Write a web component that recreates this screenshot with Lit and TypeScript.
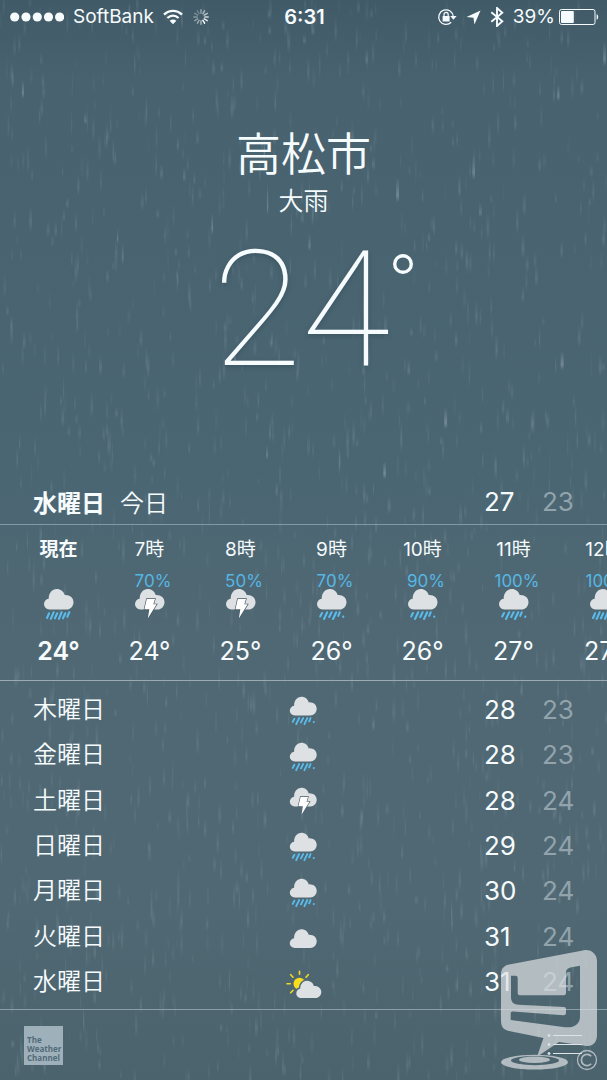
import { LitElement, html, svg, css, nothing } from "lit";
import { customElement, property } from "lit/decorators.js";

type Sky = "heavy" | "rain" | "thunder" | "cloud" | "sun";

interface Hour {
  label: string;
  chance?: string;
  sky: Sky;
  temp: string;
}

interface Day {
  name: string;
  sky: Sky;
  high: number;
  low: number;
}

const HOURS: Hour[] = [
  { label: "現在", sky: "heavy", temp: "24°" },
  { label: "7時", chance: "70%", sky: "thunder", temp: "24°" },
  { label: "8時", chance: "50%", sky: "thunder", temp: "25°" },
  { label: "9時", chance: "70%", sky: "rain", temp: "26°" },
  { label: "10時", chance: "90%", sky: "rain", temp: "26°" },
  { label: "11時", chance: "100%", sky: "rain", temp: "27°" },
  { label: "12時", chance: "100%", sky: "heavy", temp: "27°" },
];

const DAYS: Day[] = [
  { name: "木曜日", sky: "rain", high: 28, low: 23 },
  { name: "金曜日", sky: "rain", high: 28, low: 23 },
  { name: "土曜日", sky: "thunder", high: 28, low: 24 },
  { name: "日曜日", sky: "rain", high: 29, low: 24 },
  { name: "月曜日", sky: "rain", high: 30, low: 24 },
  { name: "火曜日", sky: "cloud", high: 31, low: 24 },
  { name: "水曜日", sky: "sun", high: 31, low: 24 },
];

/* Falling rain behind the forecast */
@customElement("rain-backdrop")
export class RainBackdrop extends LitElement {
  static styles = css`
    :host {
      display: block;
    }
    .rain {
      display: block;
      width: 100%;
      height: 100%;
    }
  `;

  render() {
    let seed = 20160629;
    const next = () => {
      seed = (seed * 1664525 + 1013904223) % 4294967296;
      return seed / 4294967296;
    };
    const drops = Array.from({ length: 1500 }, () => {
      const length = 10 + next() * 20;
      const width = 1 + next() * 2;
      return {
        x: next() * 607,
        y: next() * 1080 - 10,
        length,
        width,
        alpha: 0.2 + next() * 0.5,
      };
    });
    const bright = Array.from({ length: 30 }, () => ({
      x: next() * 607,
      y: next() * 480,
      length: 10 + next() * 18,
      width: 1 + next() * 2,
      alpha: 0.4 + next() * 0.5,
    }));
    const draw = (
      d: { x: number; y: number; length: number; width: number; alpha: number },
      fill: string
    ) => svg`<rect x=${d.x.toFixed(1)} y=${d.y.toFixed(1)}
      width=${d.width.toFixed(1)} height=${d.length.toFixed(1)}
      opacity=${Math.min(1, d.alpha).toFixed(2)} fill=${fill}></rect>`;
    return html`<svg class="rain" viewBox="0 0 607 1080" preserveAspectRatio="xMidYMid slice" aria-hidden="true">
      <defs>
        <linearGradient id="soft" x1="0" y1="0" x2="0" y2="1">
          <stop offset="0" stop-color="#b4cad4" stop-opacity="0"></stop>
          <stop offset="0.6" stop-color="#b4cad4" stop-opacity="0.22"></stop>
          <stop offset="1" stop-color="#b4cad4" stop-opacity="0"></stop>
        </linearGradient>
        <linearGradient id="streak" x1="0" y1="0" x2="0" y2="1">
          <stop offset="0" stop-color="#cfe0e6" stop-opacity="0"></stop>
          <stop offset="0.7" stop-color="#cfe0e6" stop-opacity="0.35"></stop>
          <stop offset="1" stop-color="#cfe0e6" stop-opacity="0"></stop>
        </linearGradient>
      </defs>
      ${drops.map((d) => draw(d, "url(#soft)"))}
      ${bright.map((d) => draw(d, "url(#streak)"))}
    </svg>`;
  }
}

/* One weather glyph: cloud with rain, lightning or sun */
@customElement("sky-icon")
export class SkyIcon extends LitElement {
  static properties = { sky: { type: String } };
  declare sky: Sky;

  static styles = css`
    :host {
      display: block;
      width: 36px;
      height: 34px;
    }
    .glyph {
      display: block;
      width: 100%;
      height: 100%;
      overflow: visible;
    }
    .cloud {
      fill: #dde1e4;
    }
    .drop {
      fill: none;
      stroke: #5abcec;
      stroke-width: 2.1;
      stroke-linecap: round;
    }
    .bolt {
      fill: #ffffff;
      stroke: #4b5a64;
      stroke-width: 1.3;
      stroke-linejoin: miter;
      paint-order: stroke;
    }
    .sun {
      fill: #f8dd1c;
    }
    .ray {
      fill: none;
      stroke: #f3dc1e;
      stroke-width: 1.6;
      stroke-linecap: round;
    }
    .gap {
      fill: #516a77;
    }
  `;

  private cloud() {
    return svg`<path class="cloud" d="M8.6 22.5C5.4 22.5 3 20.1 3 17.1C3 14.3 5 12.1 7.7 11.7C7.6 6.2 11.2 2 15.8 2C19.6 2 22.6 4.4 23.7 8.1C28.700 7.700 32.500 10.900 32.500 15.200C32.500 19.300 29.400 22.500 25.500 22.500Z"></path>`;
  }

  render() {
    const heavy = "M8 26.300L6 31M12.600 25.300L9.800 31.800M16.200 26.300L13.900 31.300M20.700 25.300L17.900 31.800M24.300 26.300L22 31.300M28.300 25.300L26.300 29.800";
    const steady = "M8 26L6.200 29.500M13.200 25.300L10 32M17.600 25.300L15.200 30M22.200 25.300L19 32M25.700 25.300L24.200 28.800M29.300 29.500L29.200 29.800";
    return html`<svg class="glyph" viewBox="0 0 36 34" aria-hidden="true">
      ${this.sky === "sun"
        ? svg`<g transform="translate(0 5)">
          <path class="ray" d="M13.500 1.200V4.300M4.700 4.700L7 7.200M22.300 4.700L20 7.200M1 13.800H4.200M4.700 22.700L7 20.300"></path>
          <circle class="sun" cx="13.500" cy="13.800" r="6"></circle>
          <path class="gap" d="M9.200 21C9.800 19.200 11 18 12.900 17.500C13.500 12.500 16.500 9.400 20.900 9.400L24 16L12 25Z"></path>
          <path class="cloud" d="M15.200 28C12.400 28 10.300 26 10.300 23.400C10.300 21 12 19.100 14.200 18.800C14.200 14.100 17.300 10.700 21.200 10.700C24.500 10.700 27 12.800 27.900 15.900C32.200 15.600 35.300 18.300 35.300 22C35.300 25.400 32.700 28 29.400 28Z"></path></g>`
        : this.sky === "cloud"
          ? svg`<g transform="translate(0 6)">${this.cloud()}</g>`
          : this.cloud()}
      ${this.sky === "heavy" ? svg`<path class="drop" d=${heavy}></path>` : nothing}
      ${this.sky === "rain" ? svg`<path class="drop" d=${steady}></path>` : nothing}
      ${this.sky === "thunder"
        ? svg`<path class="bolt" d="M14.800 12H23L21.300 17.300H24.600L15.800 31.500L17.300 22.300H12.400Z"></path>`
        : nothing}
    </svg>`;
  }
}

@customElement("app-root")
export class AppRoot extends LitElement {
  static styles = css`
    :host {
      display: block;
      color: #f6fbfd;
      font-family: Inter, "Noto Sans CJK JP", sans-serif;
    }
    .screen {
      position: relative;
      box-sizing: border-box;
      min-height: 100vh;
      display: flex;
      flex-direction: column;
      overflow: hidden;
      background: linear-gradient(#405a67 0, #48626f 80px, #4b6673 45%, #506873 60%, #506873 84%, #4b636d 100%);
    }
    .rain {
      position: absolute;
      inset: 0;
    }
    .status,
    .now,
    .today,
    .hours,
    .days,
    .foot {
      position: relative;
    }

    .status {
      display: grid;
      grid-template-columns: 1fr auto 1fr;
      align-items: center;
      height: 34px;
      padding: 0 8px 0 10px;
      font-size: 19px;
      line-height: 24px;
    }
    .side {
      display: flex;
      align-items: center;
      gap: 9px;
    }
    .end {
      justify-content: flex-end;
    }
    .clock {
      font-size: 20px;
      font-weight: 600;
    }
    .bars,
    .wifi,
    .spin,
    .lock,
    .arrow,
    .tooth,
    .cell {
      display: block;
      flex: none;
      fill: #f6fbfd;
    }
    .thin {
      fill: none;
      stroke: #f6fbfd;
    }
    .power {
      display: flex;
      align-items: center;
      gap: 4px;
    }

    .now {
      height: 440px;
      padding-top: 93px;
      display: flex;
      flex-direction: column;
      align-items: center;
      box-sizing: border-box;
    }
    .city {
      margin: 0;
      font-size: 45px;
      line-height: 56px;
      font-weight: 350;
    }
    .condition {
      margin: 0;
      font-size: 25px;
      line-height: 36px;
      font-weight: 350;
    }
    .reading {
      display: flex;
      margin: 7px 0 0 20px;
      font-family: Roboto, sans-serif;
      font-size: 162px;
      line-height: 168px;
      font-weight: 100;
      text-shadow: 0 2px 4px #2c465480;
    }
    .degree {
      width: 22px;
      height: 22px;
      margin: 27px 0 0 2px;
    }

    .today {
      display: flex;
      align-items: center;
      gap: 15px;
      height: 46px;
      padding: 4px 33px 0;
      border-bottom: 1px solid #8499a4;
      font-size: 24px;
      font-weight: 350;
    }
    .weekday {
      font-weight: 700;
    }
    .range {
      display: grid;
      grid-template-columns: 32px 32px;
      gap: 26px;
      margin-left: auto;
      font-size: 26px;
      font-weight: 400;
    }
    .low {
      color: #92a3ac;
    }

    .hours {
      display: flex;
      box-sizing: border-box;
      margin: 0;
      padding: 13px 0 14px 13px;
      list-style: none;
      overflow: hidden;
      border-bottom: 1px solid #9aabb4;
    }
    .hour {
      flex: none;
      width: 91px;
      display: grid;
      grid-template-rows: 24px 36px 34px 34px;
      justify-items: center;
    }
    .hour sky-icon {
      margin-top: -11px;
    }
    .label {
      font-size: 19px;
      line-height: 24px;
    }
    .chance {
      padding: 8px 0 0 7px;
      font-size: 17px;
      line-height: 22px;
      color: #56b6e4;
    }
    .temp {
      align-self: end;
      font-size: 25px;
      line-height: 30px;
    }
    .hour:first-child .label {
      font-weight: 700;
    }
    .hour:first-child .temp {
      font-weight: 600;
    }

    .days {
      flex: 1;
      display: flex;
      flex-direction: column;
      margin: 0;
      padding: 6px 33px 4px;
      list-style: none;
      border-bottom: 1px solid #8b9fa9;
    }
    .day {
      flex: 1;
      display: grid;
      grid-template-columns: 1fr auto 1fr;
      align-items: center;
      font-size: 24px;
      line-height: 36px;
      font-weight: 350;
    }
    .small {
      width: 33px;
      height: 31px;
      margin-top: 2px;
    }

    .foot {
      display: flex;
      align-items: center;
      justify-content: space-between;
      height: 70px;
      padding: 0 24px;
    }
    .source {
      box-sizing: border-box;
      width: 39px;
      height: 39px;
      padding: 9px 0 0 3px;
      background: #9eb0ba;
      color: #526b78;
      font-family: "Open Sans", sans-serif;
      font-size: 8px;
      line-height: 9px;
      font-weight: 700;
      text-decoration: none;
    }
    .list {
      border: 0;
      padding: 0;
      background: none;
    }
    .lines {
      display: block;
      fill: #dfe6ea;
      stroke: #dfe6ea;
    }

    .mark {
      position: absolute;
      right: 8px;
      bottom: 4px;
      pointer-events: none;
    }
    .plate {
      fill: #dde1e4;
      fill-rule: evenodd;
    }
    .ring {
      fill: none;
      stroke: #dde1e4;
    }
  `;

  @property() place = "高松市";

  private statusBar() {
    return html`<header class="status">
      <div class="side">
        <svg class="bars" width="54" height="10" viewBox="0 0 54 10" aria-hidden="true">
          ${[4.7, 16, 27.3, 38.5, 49.6].map((x) => svg`<circle cx=${x} cy="5" r="4.6"></circle>`)}
        </svg>
        <span>SoftBank</span>
        <svg class="wifi" width="20" height="16" viewBox="0 0 20 16" aria-hidden="true">
          <path class="thin" stroke-width="2.300" d="M1 5.600C6.200 0.500 13.800 0.500 19 5.600M4.400 9C7.700 6 12.300 6 15.600 9"></path>
          <path d="M10 15.300L6.600 11.700C8.500 10 11.500 10 13.400 11.700Z"></path>
        </svg>
        <svg class="spin" width="18" height="18" viewBox="-9 -9 18 18" aria-hidden="true">
          ${Array.from({ length: 12 }, (_, i) => svg`<line class="thin" stroke-width="1.500" stroke-linecap="round"
            x1="0" y1="-3.800" x2="0" y2="-7.200" transform=${`rotate(${i * 30})`}
            opacity=${(i < 6 ? 0.45 + i * 0.11 : 0.55 - (i - 6) * 0.06).toFixed(2)}></line>`)}
        </svg>
      </div>
      <time class="clock">6:31</time>
      <div class="side end">
        <svg class="lock" width="20" height="18" viewBox="0 0 20 18" aria-hidden="true">
          <path class="thin" stroke-width="1.300" d="M14.200 14.300A7.300 7.300 0 1 1 16.300 8.500"></path>
          <path d="M13.200 8H19.600L16.400 11.800Z"></path>
          <rect x="5.600" y="8" width="7" height="5.500" rx="0.600"></rect>
          <path class="thin" stroke-width="1.200" d="M7 8.300V6.500A2.100 2.100 0 0 1 11.200 6.500V8.300"></path>
        </svg>
        <svg class="arrow" width="15" height="15" viewBox="0 0 16 16" aria-hidden="true">
          <path d="M15.500 0.500L9 15.500L8 8.300L0.500 7.500Z"></path>
        </svg>
        <svg class="tooth" width="14" height="20" viewBox="0 0 14 20" aria-hidden="true">
          <path class="thin" stroke-width="1.900" d="M1.300 5.300L12.300 14.300L7 19V1L12.300 5.700L1.300 14.700"></path>
        </svg>
        <span class="power">
          <span>39%</span>
          <svg class="cell" width="40" height="16" viewBox="0 0 40 16" aria-hidden="true">
            <rect class="thin" stroke-width="1" x="0.500" y="0.500" width="35.500" height="15" rx="2"></rect>
            <rect x="2" y="2" width="12.800" height="12" rx="0.800"></rect>
            <path d="M37.600 5.200C39.700 5.700 39.700 10.300 37.600 10.800Z"></path>
          </svg>
        </span>
      </div>
    </header>`;
  }

  private watermark() {
    return html`<svg class="mark" width="98" height="128" viewBox="0 0 98 128" opacity="0.7" aria-hidden="true">
      <path class="plate" d="M0 27C0 21.500 2 18 7 16.700L83 2.200C90 1 96 6 96 13V87C96 94 92 98.500 85.700 98L58 94L36 108.700L42.500 90L8 83C3 82 0 79 0 73Z
        M10 27.700V49.300C10 54 12.500 56.500 17.300 56.700L63 59Q65 59.200 65 61V65.300Q65 67.400 62.300 67.300L12 63.400Q9.700 63.200 9.700 65V72L64 79.200C73 80.200 79 76 79 68.700V17.700L70.700 19.300C67 20 65 21.500 65 25V45Q65 47.300 63 47.300H18.700Q16.700 47.300 16.700 45V30Q16.700 27.700 14.500 27.700Z"></path>
      <path class="plate" d="M0 114.200a33.500 7.400 0 1 0 67 0a33.500 7.400 0 1 0 -67 0ZM10 112.600a24 4.600 0 1 0 48 0a24 4.600 0 1 0 -48 0Z"></path>
      <ellipse class="plate" cx="33.500" cy="111.800" rx="15.500" ry="3.200"></ellipse>
      <circle class="ring" cx="86" cy="112" r="9.500" stroke-width="1.300"></circle>
      <path class="ring" stroke-width="1.700" d="M90.200 108.300A5.600 5.600 0 1 0 90.200 115.700"></path>
    </svg>`;
  }

  render() {
    return html`<main class="screen">
      <rain-backdrop class="rain"></rain-backdrop>
      ${this.statusBar()}
      <section class="now">
        <h1 class="city">${this.place}</h1>
        <p class="condition">大雨</p>
        <div class="reading">
          <span>24</span>
          <svg class="degree" viewBox="0 0 22 22" role="img" aria-label="度">
            <circle class="thin" cx="11" cy="11" r="8.300" stroke-width="3.400"></circle>
          </svg>
        </div>
      </section>
      <section class="today">
        <span class="weekday">水曜日</span>
        <span>今日</span>
        <span class="range"><span>27</span><span class="low">23</span></span>
      </section>
      <ul class="hours">
        ${HOURS.map(
          (h) => html`<li class="hour">
            <span class="label">${h.label}</span>
            <span class="chance">${h.chance ?? nothing}</span>
            <sky-icon .sky=${h.sky}></sky-icon>
            <span class="temp">${h.temp}</span>
          </li>`
        )}
      </ul>
      <ul class="days">
        ${DAYS.map(
          (d) => html`<li class="day">
            <span>${d.name}</span>
            <sky-icon class=${d.sky === "sun" ? "large" : "small"} .sky=${d.sky}></sky-icon>
            <span class="range"><span>${d.high}</span><span class="low">${d.low}</span></span>
          </li>`
        )}
      </ul>
      <footer class="foot">
        <a class="source" href="#weather">The<br />Weather<br />Channel</a>
        <button class="list" type="button" aria-label="都市リスト">
          <svg class="lines" width="36" height="24" viewBox="0 0 36 24" aria-hidden="true">
            <path d="M6 2.500H35M6 11.500H35M6 20.500H35"></path>
            <circle cx="2" cy="2.500" r="1"></circle>
            <circle cx="2" cy="11.500" r="1"></circle>
            <circle cx="2" cy="20.500" r="1"></circle>
          </svg>
        </button>
      </footer>
      ${this.watermark()}
    </main>`;
  }
}
